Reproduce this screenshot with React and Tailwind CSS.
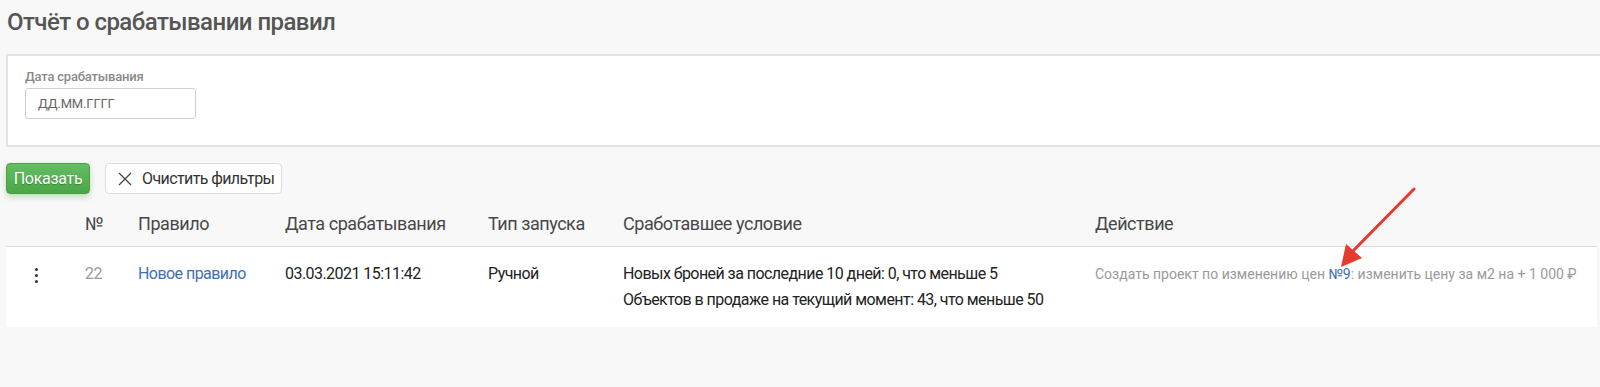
import React from "react";

export default function App() {
  return (
    <div className="min-h-[387px] w-[1600px] overflow-hidden bg-[#f9f8f9] pl-[6px] font-['Roboto',sans-serif]">
      <h1 className="pt-[8px] pl-[1px] text-[24px] leading-[28px] font-medium tracking-[-0.55px] text-[#555]">
        Отчёт о срабатывании правил
      </h1>
      <div className="mt-[18px] mr-[-10px] h-[93px] border-2 border-[#e3e3e3] bg-white pl-[17px] pt-[13px]">
        <div className="text-[13px] leading-[16px] font-medium tracking-[-0.2px] text-[#8a8a8a]">Дата срабатывания</div>
        <div className="mt-[3px] flex h-[31px] w-[171px] items-center rounded-[3px] border border-[#cfcfcf] bg-white pl-[12px] text-[13px] tracking-[-0.15px] text-[#666]">
          ДД.ММ.ГГГГ
        </div>
      </div>
      <div className="mt-[16px] flex gap-[15px]">
        <button className="flex h-[31px] w-[84px] items-center justify-center whitespace-nowrap rounded-[4px] border border-[#4c9e48] bg-gradient-to-b from-[#66bd62] to-[#4aa646] text-[16px] tracking-[-0.3px] text-white shadow-[0_3px_6px_rgba(76,166,70,0.35)] [text-shadow:0_1px_1px_rgba(0,0,0,0.25)]">
          Показать
        </button>
        <button className="flex h-[31px] w-[177px] items-center gap-[10px] whitespace-nowrap rounded-[4px] border border-[#dcdcdc] bg-white pl-[12px] text-[16px] tracking-[-0.6px] text-[#333]">
          <svg width="14" height="14" viewBox="0 0 14 14" fill="none" stroke="#444" strokeWidth="1.3">
            <path d="M1 1L13 13M13 1L1 13" />
          </svg>
          Очистить фильтры
        </button>
      </div>
      <div className="mt-[18px] mr-[3px]">
        <div className="grid grid-cols-[79px_53px_147px_203px_135px_472px_1fr] border-b border-[#dcdcdc] pb-[10px] text-[18px] leading-[24px] tracking-[-0.45px] text-[#474747]">
          <div></div>
          <div>№</div>
          <div>Правило</div>
          <div>Дата срабатывания</div>
          <div>Тип запуска</div>
          <div>Сработавшее условие</div>
          <div>Действие</div>
        </div>
        <div className="grid h-[80px] grid-cols-[79px_53px_147px_203px_135px_472px_1fr] bg-white pt-[14px] text-[16px] leading-[26px] tracking-[-0.55px] text-[#222]">
          <div className="flex justify-start pl-[29px] pt-[7px]">
            <div className="flex flex-col gap-[3px]">
              <span className="h-[3px] w-[3px] rounded-full bg-[#2d3440]"></span>
              <span className="h-[3px] w-[3px] rounded-full bg-[#2d3440]"></span>
              <span className="h-[3px] w-[3px] rounded-full bg-[#2d3440]"></span>
            </div>
          </div>
          <div className="text-[#9a9a9a]">22</div>
          <div className="text-[#3f6fb3]">Новое правило</div>
          <div>03.03.2021 15:11:42</div>
          <div>Ручной</div>
          <div>
            <div>Новых броней за последние 10 дней: 0, что меньше 5</div>
            <div>Объектов в продаже на текущий момент: 43, что меньше 50</div>
          </div>
          <div className="relative text-[14px] tracking-normal text-[#9a9a9a]">
            Создать проект по изменению цен <span className="text-[#3f6fb3]">№9</span>: изменить цену за м2 на + 1 000 ₽
            <svg className="absolute left-[234px] top-[-74px]" width="90" height="90" viewBox="0 0 90 90">
              <line x1="85" y1="2" x2="22" y2="66" stroke="#e53a2e" strokeWidth="3" strokeLinecap="round" />
              <polygon points="12,80 17,57 33,71" fill="#e53a2e" />
            </svg>
          </div>
        </div>
      </div>
    </div>
  );
}
